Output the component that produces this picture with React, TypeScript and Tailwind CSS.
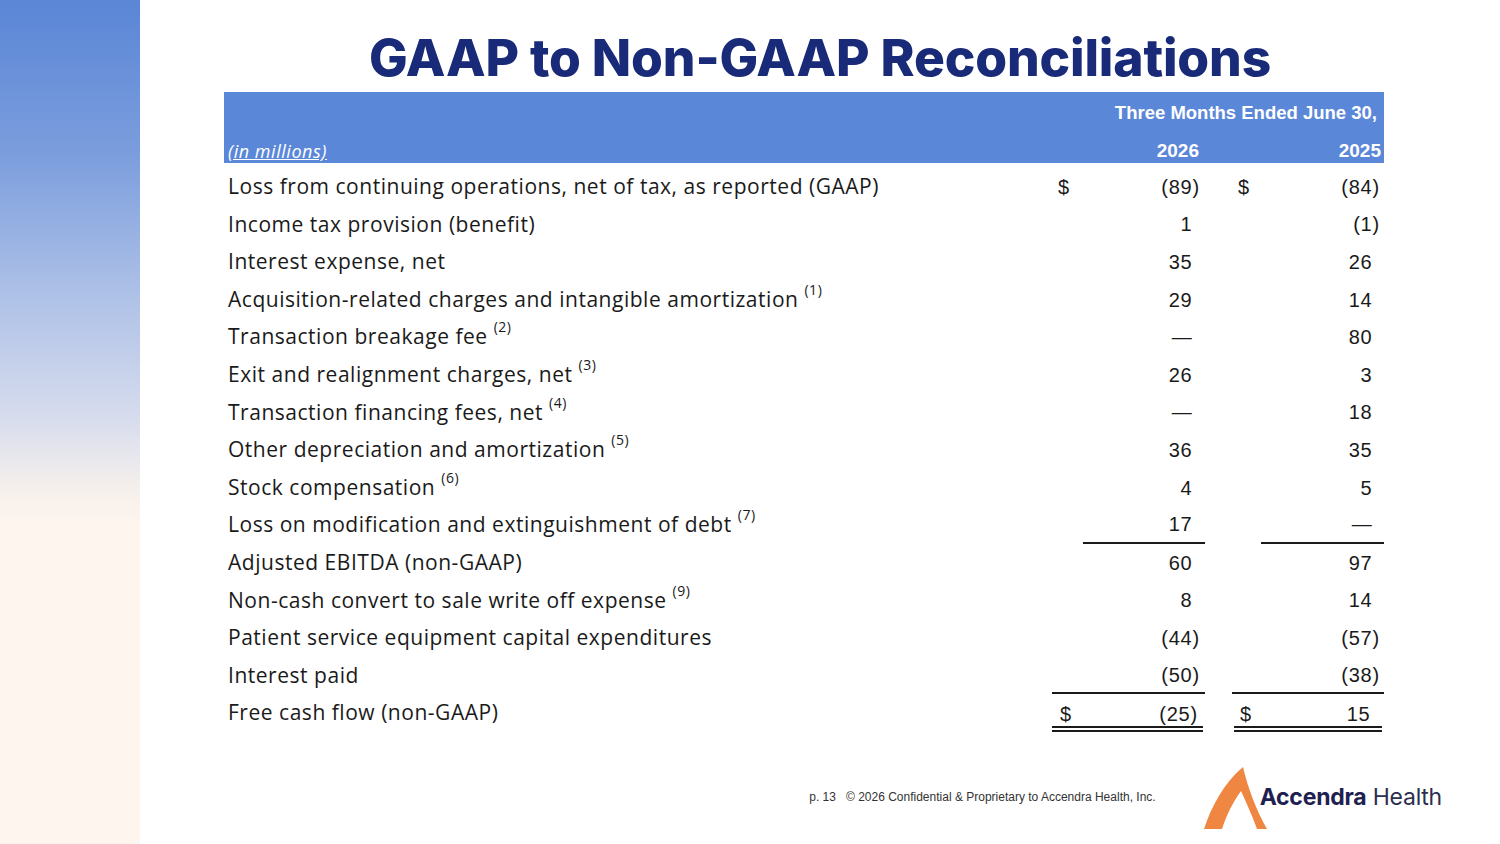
import React from 'react';

type Row = {
  label: string;
  note?: string;
  a: string;
  b: string;
  dollar?: boolean;
  lineA?: string;
  lineB?: string;
  total?: boolean;
};

const rows: Row[] = [
  { label: 'Loss from continuing operations, net of tax, as reported (GAAP)', a: '(89)', b: '(84)', dollar: true },
  { label: 'Income tax provision (benefit)', a: '1', b: '(1)' },
  { label: 'Interest expense, net', a: '35', b: '26' },
  { label: 'Acquisition-related charges and intangible amortization', note: '(1)', a: '29', b: '14' },
  { label: 'Transaction breakage fee', note: '(2)', a: '—', b: '80' },
  { label: 'Exit and realignment charges, net', note: '(3)', a: '26', b: '3' },
  { label: 'Transaction financing fees, net', note: '(4)', a: '—', b: '18' },
  { label: 'Other depreciation and amortization', note: '(5)', a: '36', b: '35' },
  { label: 'Stock compensation', note: '(6)', a: '4', b: '5' },
  { label: 'Loss on modification and extinguishment of debt', note: '(7)', a: '17', b: '—', lineA: 'w-[122px]', lineB: 'w-[123px]' },
  { label: 'Adjusted EBITDA (non-GAAP)', a: '60', b: '97' },
  { label: 'Non-cash convert to sale write off expense', note: '(9)', a: '8', b: '14' },
  { label: 'Patient service equipment capital expenditures', a: '(44)', b: '(57)' },
  { label: 'Interest paid', a: '(50)', b: '(38)', lineA: 'w-[153px]', lineB: 'w-[152px]' },
  { label: 'Free cash flow (non-GAAP)', a: '(25)', b: '15', dollar: true, total: true },
];

const Num = ({ v }: { v: string }) => {
  const neg = v.startsWith('(');
  return (
    <span>
      {v}
      {!neg && <span className="invisible">)</span>}
    </span>
  );
};

const Cell = ({ v, dollar, line, total, pl, pr }: { v: string; dollar?: boolean; line?: string; total?: boolean; pl: string; pr: string }) => {
  return (
    <div className="flex h-full justify-end">
      <div
        className={`flex items-center justify-between ${line ? `${line} border-b-2 border-[#1a1a1a]` : 'w-full'} ${total ? 'mx-[2px] border-b-[6px] border-double border-[#1a1a1a] pt-[8px]' : ''}`}
      >
        <span className={pl}>{dollar ? '$' : ''}</span>
        <span className={pr}>
          <Num v={v} />
        </span>
      </div>
    </div>
  );
};

const Logo = () => (
  <div className="flex items-center">
    <svg width="66" height="64" viewBox="0 0 66 64" className="mt-[2px]">
      <path
        d="M2 63 C 9 41, 22 17, 41 1 C 46 22, 54 44, 65 63 L 55 63 C 50 49, 44 36, 39 25 C 31 36, 25 48, 20 63 Z"
        fill="#ef8743"
      />
    </svg>
    <div className="ml-[-8px] font-['Inter',sans-serif] text-[23px] leading-none tracking-[-0.01em] text-[#1e2150]">
      <span className="font-bold">Accendra</span>
      <span className="font-normal text-[#2b2e4e]"> Health</span>
    </div>
  </div>
);

export default function App() {
  return (
    <div className="flex h-[844px] w-[1500px] overflow-hidden bg-white text-[#1a1a1a]">
      <div className="w-[140px] shrink-0 bg-[linear-gradient(to_bottom,#5a86d6_0%,#7b9ddd_18%,#a8bde6_33%,#d8dded_50%,#f6f0ec_58%,#fdf5ee_62%,#fdf5ee_100%)]" />
      <div className="flex flex-1 flex-col">
        <h1 className="mt-[28px] h-[64px] text-center font-['Inter',sans-serif] text-[51.5px] font-extrabold leading-[58px] tracking-[-0.003em] text-[#182a78]">
          GAAP to Non-GAAP Reconciliations
        </h1>
        <div className="ml-[84px] w-[1160px]">
          <div className="flex h-[71px] flex-col bg-[#5b87d8] font-['Liberation_Sans',sans-serif] font-bold text-white">
            <div className="mt-[9px] flex h-[24px] items-center justify-end pr-[7px] text-[18.5px]">
              Three Months Ended June 30,
            </div>
            <div className="mt-[14px] flex h-[24px] items-center text-[19px]">
              <div className="flex-1 pl-[4px] font-['Open_Sans',sans-serif] text-[18px] font-normal italic tracking-[0.03em] underline">
                (in millions)
              </div>
              <div className="w-[155px] pr-[6px] text-right">2026</div>
              <div className="w-[27px]" />
              <div className="w-[152px] pr-[3px] text-right">2025</div>
            </div>
          </div>
          <div className="pt-[5px]">
            {rows.map((r) => (
              <div key={r.label} className="flex h-[37.6px] items-stretch">
                <div className="flex flex-1 items-center pl-[4px] font-['Open_Sans',sans-serif] text-[21px] tracking-[0.025em]">
                  {r.label}
                  {r.note && <sup className="ml-[6px] -top-[0.7em] text-[14px]">{r.note}</sup>}
                </div>
                <div className="w-[155px] font-['Liberation_Sans',sans-serif] text-[20px] tracking-[0.04em]">
                  <Cell v={r.a} dollar={r.dollar} line={r.lineA} total={r.total} pl="pl-[8px]" pr="pr-[5px]" />
                </div>
                <div className="w-[27px]" />
                <div className="w-[152px] font-['Liberation_Sans',sans-serif] text-[20px] tracking-[0.04em]">
                  <Cell v={r.b} dollar={r.dollar} line={r.lineB} total={r.total} pl="pl-[6px]" pr="pr-[4px]" />
                </div>
              </div>
            ))}
          </div>
        </div>
        <div className="mt-auto mb-[14px] flex items-center justify-end pr-[58px]">
          <div className="flex items-center font-['Liberation_Sans',sans-serif] text-[12px] text-[#333]">
            <span>p. 13</span>
            <span className="ml-[10px]">© 2026 Confidential &amp; Proprietary to Accendra Health, Inc.</span>
          </div>
          <div className="ml-[46px]">
            <Logo />
          </div>
        </div>
      </div>
    </div>
  );
}
